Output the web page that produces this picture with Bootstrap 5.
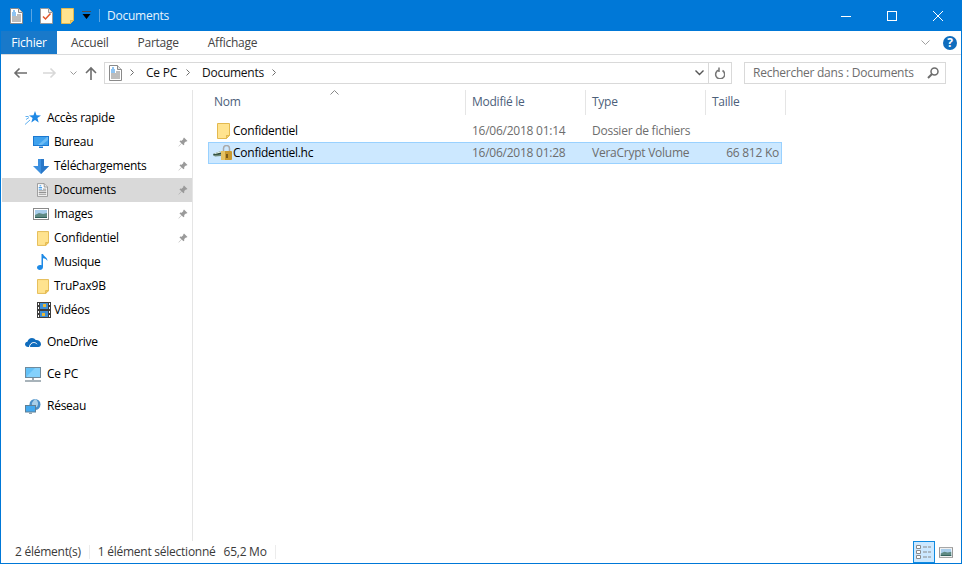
<!DOCTYPE html>
<html lang="fr">
<head>
  <meta charset="UTF-8">
  <title>Documents</title>
  <link href="https://cdn.jsdelivr.net/npm/bootstrap@5.3.3/dist/css/bootstrap.min.css" rel="stylesheet">
  <style>
    html, body { height: 564px; overflow: hidden; }
    body { background: #fff; color: #000; font: 12px/16px "Open Sans", sans-serif; letter-spacing: -.25px; }
    .win { width: 962px; height: 564px; border: 1px solid #0078d7; border-top: 0; }
    svg { display: block; flex: none; }

    .titlebar { height: 31px; background: #0078d7; color: #fff; padding-left: 9px; }
    .qa-sep { width: 1px; height: 13px; background: #5aa5e3; }
    .title-text { margin-left: 7px; color: #e8f3fc; }
    .winbtn { width: 46px; height: 31px; }

    .ribbon { height: 24px; border-bottom: 1px solid #dadbdc; }
    .rib-file { width: 56px; height: 23px; background: #1979ca; color: #fff; }
    .rib-tab { color: #444; }
    .rib-tab.t1 { margin-left: 14px; }
    .rib-tab.t2 { margin-left: 29px; }
    .rib-tab.t3 { margin-left: 29px; }
    .rib-help { width: 14px; height: 14px; border-radius: 50%; background: #0f6cbd; color: #fff; font-weight: 700; font-size: 12px; line-height: 14px; text-align: center; margin: 0 4px 0 13px; letter-spacing: 0; }

    .addr-row { height: 35px; padding: 6px 12px 6px 12px; }
    .addr-box { width: 628px; height: 22px; border: 1px solid #d9d9d9; margin-left: 7px; }
    .addr-crumb { margin-left: 12px; color: #111; }
    .addr-sep { width: 1px; height: 20px; background: #d9d9d9; }
    .search-box { width: 202px; height: 22px; border: 1px solid #d9d9d9; margin-left: 12px; padding: 0 6px 0 8px; color: #6d6d6d; }

    .main-area { height: 451px; }
    .side { width: 191px; padding-top: 16px; flex: none; }
    .side-row { height: 24px; padding-right: 4px; }
    .side-row.on { background: #d9d9d9; }
    .side-row.lvl2 { padding-left: 31px; margin-left: 1px; }
    .side-row.lvl1 { padding-left: 23px; margin-left: 1px; }
    .side-ico { width: 20px; margin-right: 1px; }
    .lvl1 .side-ico { width: 19px; margin-right: 3px; }
    .side-gap { height: 8px; }
    .pane { border-left: 1px solid #e5e5e5; width: 769px; padding-left: 15px; }

    .head-row { height: 25px; color: #4c607a; position: relative; }
    .head-cell { height: 25px; border-right: 1px solid #e5e5e5; padding-left: 6px; padding-top: 4px; }
    .col-nm { width: 258px; }
    .col-dt { width: 120px; }
    .col-ty { width: 120px; }
    .col-sz { width: 80px; }
    .sort-caret { position: absolute; left: 122px; top: 0; }
    .file-list { margin-top: 5px; }
    .file-row { width: 574px; height: 22px; border: 1px solid transparent; color: #6d6d6d; margin-left: 0; }
    .file-row.on { background: #cce8ff; border-color: #99d1ff; }
    .file-row .nm { width: 257px; padding-left: 4px; color: #000; }
    .file-row .dt { width: 120px; padding-left: 6px; }
    .file-row .ty { width: 120px; padding-left: 6px; }
    .file-row .sz { width: 75px; text-align: right; padding-right: 2px; }
    .file-ico { width: 20px; margin-right: 0; }

    .statusbar { height: 22px; color: #3a3a3a; padding-left: 14px; }
    .stat-sep { width: 1px; height: 14px; background: #ececec; }
    .view-on { width: 22px; height: 22px; background: #cce8ff; border: 1px solid #0f8ae0; border-bottom-width: 1px; }
  </style>
</head>
<body>
<svg width="0" height="0" class="position-absolute">
  <defs>
    <symbol id="i-doc" viewBox="0 0 13 16">
      <path d="M.5.5h8l4 4v11H.5z" fill="#fff" stroke="#8a8a8a"/>
      <path d="M8.5.5v4h4" fill="#e6e6e6" stroke="#8a8a8a"/>
      <path d="M3 3h2M2 5h4M2 7h4" stroke="#1e88e5"/>
      <path d="M2 9h9M2 11h9M2 13h9M7 7h4" stroke="#7a7a7a"/>
    </symbol>
    <symbol id="i-task" viewBox="0 0 13 16">
      <path d="M.5.5h8l4 4v11H.5z" fill="#fff" stroke="#9a9a9a"/>
      <path d="M8.5.5v4h4" fill="#e6e6e6" stroke="#9a9a9a"/>
      <path d="M3 8.5l2.5 2.5 5-5.500" fill="none" stroke="#e2562a" stroke-width="1.500"/>
    </symbol>
    <symbol id="i-folder" viewBox="0 0 13 16">
      <path d="M.5.5h12v12h-3v3H.5z" fill="#ffe38f" stroke="#e3b94f"/>
      <path d="M9.500 15.500v-3h3z" fill="#f4cf6b" stroke="#e3b94f"/>
    </symbol>
    <symbol id="i-pin" viewBox="0 0 10 10">
      <path d="M6 .5l3.500 3.500-1 .6-.6-.2-1.700 1.700.1 1.400-.8.8-1.900-1.900L.8 9.500l-.3-.3 2.900-2.900-1.900-1.900.8-.8 1.400.1L5.400 2l-.2-.6z" fill="#9a9a9a"/>
    </symbol>
    <symbol id="i-star" viewBox="0 0 16 14">
      <path d="M10 0l1.500 4.300 4.500.1-3.600 2.700 1.300 4.400-3.700-2.600-3.700 2.600 1.300-4.400-3.600-2.700 4.500-.1z" fill="#1e88e5"/>
      <path d="M0 13.500l5-4.500M1 8.500l3-2M.5 5.500h3" stroke="#5fb0f0"/>
    </symbol>
    <symbol id="i-desk" viewBox="0 0 16 12">
      <rect width="16" height="10" fill="#1b78d0"/>
      <rect x="1" y="1" width="14" height="8" fill="#3fa2ee"/>
      <path d="M5 9l9-8h1v3l-6 5z" fill="#6dbcf5"/>
      <rect x="6" y="10.500" width="4" height="1.500" fill="#1b78d0"/>
    </symbol>
    <symbol id="i-down" viewBox="0 0 16 15">
      <path d="M5 0h6v7h5l-8 8-8-8h5z" fill="#3b8fdf"/>
      <path d="M8 0h3v7h5l-8 8z" fill="#2a78c8"/>
    </symbol>
    <symbol id="i-img" viewBox="0 0 16 12">
      <rect x=".5" y=".5" width="15" height="11" fill="#fff" stroke="#8a8a8a"/>
      <rect x="2" y="2" width="12" height="8" fill="#a8cdea"/>
      <path d="M2 7l4-2 4 1 4-1v5H2z" fill="#5f8a83"/>
      <path d="M2 9h12v1H2z" fill="#2f5f58"/>
    </symbol>
    <symbol id="i-music" viewBox="0 0 11 16">
      <path d="M4.500 0h1.500c.4 2.500 4.500 3 4.500 7-1-1.500-2.500-2.500-4.500-2.700V13c0 1.800-1.500 3-3.200 3C1.300 16 0 15 0 13.500S1.500 11 3 11c.6 0 1.100.1 1.500.3z" fill="#1e8ae6"/>
    </symbol>
    <symbol id="i-film" viewBox="0 0 14 16">
      <rect width="14" height="16" fill="#3c3c3c"/>
      <path d="M1 1h1v2H1zM1 5h1v2H1zM1 9h1v2H1zM1 13h1v2H1zM12 1h1v2h-1zM12 5h1v2h-1zM12 9h1v2h-1zM12 13h1v2h-1z" fill="#fff"/>
      <rect x="3" y="1" width="8" height="6" fill="#3d8fd6"/>
      <rect x="3" y="9" width="8" height="6" fill="#3d8fd6"/>
      <path d="M6 2h3v3H6zM5 11h3v3H5z" fill="#e6b93a"/>
    </symbol>
    <symbol id="i-cloud" viewBox="0 0 16 10">
      <path d="M3.200 10C1.400 10 0 8.800 0 7.300c0-1.400 1-2.400 2.400-2.600C3 2.500 4.800 1 7 1c1.500 0 2.900.7 3.700 2C13.700 2.800 16 4.700 16 7.300 16 8.800 14.800 10 13.200 10z" fill="#0f6cbd"/>
      <path d="M4.500 10c0-2.500 2-4.500 4.300-4.500 1.400 0 2.600.7 3.200 1.700" fill="none" stroke="#fff"/>
    </symbol>
    <symbol id="i-pc" viewBox="0 0 16 15">
      <rect x=".5" y=".5" width="15" height="10" fill="#63c1f7" stroke="#6f8a9c"/>
      <path d="M2 9L10 1h5v9H2z" fill="#9bdcff" opacity=".6"/>
      <path d="M7 11h2v2H7z" fill="#9aa7b0"/>
      <path d="M0 13h16v2H0z" fill="#a8b3ba"/>
    </symbol>
    <symbol id="i-net" viewBox="0 0 16 15">
      <circle cx="10" cy="5.500" r="5.500" fill="#4a8fc7"/>
      <path d="M10 0c3 1 4 5 2 8l-4 1c1-2-2-3-1-5s2-3 3-4z" fill="#a9cfe8"/>
      <rect x=".5" y="6.500" width="10" height="6.500" fill="#43a9ef" stroke="#5f7f95"/>
      <path d="M4 13.500h3V15H4z" fill="#93a2ac"/>
    </symbol>
    <symbol id="i-vera" viewBox="0 0 20 17">
      <path d="M0 9l8-3v3.500l-7 1.500z" fill="#2c4a3c"/>
      <path d="M1 8.500L8 6v1.500L2 9z" fill="#dfeee6"/>
      <path d="M0 10l8-.500V11l-6 .5z" fill="#6f8a78"/>
      <path d="M10.500 6V3.500a3 3 0 016 0V6" fill="none" stroke="#a9a9a9" stroke-width="1.500"/>
      <rect x="8" y="6" width="11" height="9" rx="1" fill="#c9992f"/>
      <rect x="8" y="6" width="4" height="9" fill="#e5c263"/>
      <path d="M13 9h2v4h-2z" fill="#7a5a18"/>
    </symbol>
  </defs>
</svg>

<div class="win d-flex flex-column">
  <div class="titlebar d-flex align-items-center">
    <svg width="13" height="16"><use href="#i-doc"/></svg>
    <span class="qa-sep ms-2"></span>
    <svg class="ms-2" width="13" height="16"><use href="#i-task"/></svg>
    <svg class="ms-2" width="13" height="16"><use href="#i-folder"/></svg>
    <svg class="ms-2" width="9" height="9" viewBox="0 0 9 9"><path d="M0 0h9v1H0zM.5 3h8L4.500 8z" fill="#000"/><path d="M0 0h9v1H0z" fill="#fff" opacity=".3"/></svg>
    <span class="qa-sep ms-2"></span>
    <span class="title-text">Documents</span>
    <div class="d-flex ms-auto">
      <div class="winbtn d-flex align-items-center justify-content-center"><svg width="10" height="10"><path d="M0 5.500h10" stroke="#fff"/></svg></div>
      <div class="winbtn d-flex align-items-center justify-content-center"><svg width="10" height="10"><rect x=".5" y=".5" width="9" height="9" fill="none" stroke="#fff"/></svg></div>
      <div class="winbtn d-flex align-items-center justify-content-center"><svg width="10" height="10"><path d="M0 0l10 10M10 0L0 10" stroke="#fff"/></svg></div>
    </div>
  </div>

  <div class="ribbon d-flex align-items-center">
    <div class="rib-file d-flex align-items-center justify-content-center">Fichier</div>
    <span class="rib-tab t1">Accueil</span>
    <span class="rib-tab t2">Partage</span>
    <span class="rib-tab t3">Affichage</span>
    <svg class="ms-auto" width="9" height="5"><path d="M.5.500l4 4 4-4" fill="none" stroke="#a0a0a0"/></svg>
    <div class="rib-help">?</div>
  </div>

  <div class="addr-row d-flex align-items-center">
    <svg width="14" height="12"><path d="M14 6H2M6.500 1.500L2 6l4.500 4.500" fill="none" stroke="#6d6d6d" stroke-width="1.600"/></svg>
    <svg class="ms-3" width="14" height="12"><path d="M0 6h12M7.500 1.500L12 6l-4.500 4.500" fill="none" stroke="#d8d8d8" stroke-width="1.600"/></svg>
    <svg style="margin-left:13px" width="7" height="4"><path d="M.5.500l3 3 3-3" fill="none" stroke="#9a9a9a"/></svg>
    <svg class="ms-2" width="12" height="14"><path d="M6 14V2M1 7l5-5 5 5" fill="none" stroke="#6d6d6d" stroke-width="1.600"/></svg>
    <div class="addr-box d-flex align-items-center ps-1">
      <svg width="13" height="16"><use href="#i-doc"/></svg>
      <svg class="ms-2" width="4" height="7"><path d="M.5.500l3 3-3 3" fill="none" stroke="#6d6d6d"/></svg>
      <span class="addr-crumb">Ce PC</span>
      <svg class="ms-2" width="4" height="7" style="margin-left:9px!important"><path d="M.5.500l3 3-3 3" fill="none" stroke="#6d6d6d"/></svg>
      <span class="addr-crumb">Documents</span>
      <svg class="ms-2" width="4" height="7"><path d="M.5.500l3 3-3 3" fill="none" stroke="#6d6d6d"/></svg>
      <svg class="ms-auto me-1" width="9" height="6"><path d="M.5.500l4 4 4-4" fill="none" stroke="#555" stroke-width="1.400"/></svg>
      <span class="addr-sep"></span>
      <svg style="margin:0 6px 0 5px" width="11" height="12" viewBox="0 0 11 12"><path d="M8.500 3.500A4.500 4.500 0 1 1 5 3M5 .5V5" fill="none" stroke="#777" stroke-width="1.500"/></svg>
    </div>
    <div class="search-box d-flex align-items-center justify-content-between">
      <span>Rechercher dans : Documents</span>
      <svg width="12" height="12"><circle cx="7.500" cy="4.500" r="3.500" fill="none" stroke="#6d6d6d" stroke-width="1.500"/><path d="M5 7l-4 4" stroke="#6d6d6d" stroke-width="2"/></svg>
    </div>
  </div>

  <div class="main-area d-flex">
    <div class="side">
      <div class="side-row lvl1 d-flex align-items-center"><span class="side-ico"><svg width="16" height="14"><use href="#i-star"/></svg></span>Accès rapide</div>
      <div class="side-row lvl2 d-flex align-items-center"><span class="side-ico d-flex"><svg width="16" height="12"><use href="#i-desk"/></svg></span>Bureau<svg class="ms-auto" width="10" height="10"><use href="#i-pin"/></svg></div>
      <div class="side-row lvl2 d-flex align-items-center"><span class="side-ico d-flex"><svg width="16" height="15"><use href="#i-down"/></svg></span>Téléchargements<svg class="ms-auto" width="10" height="10"><use href="#i-pin"/></svg></div>
      <div class="side-row lvl2 on d-flex align-items-center"><span class="side-ico d-flex"><svg class="ms-1" width="11" height="14"><use href="#i-doc"/></svg></span>Documents<svg class="ms-auto" width="10" height="10"><use href="#i-pin"/></svg></div>
      <div class="side-row lvl2 d-flex align-items-center"><span class="side-ico d-flex"><svg width="16" height="12"><use href="#i-img"/></svg></span>Images<svg class="ms-auto" width="10" height="10"><use href="#i-pin"/></svg></div>
      <div class="side-row lvl2 d-flex align-items-center"><span class="side-ico d-flex"><svg class="ms-1" width="12" height="15"><use href="#i-folder"/></svg></span>Confidentiel<svg class="ms-auto" width="10" height="10"><use href="#i-pin"/></svg></div>
      <div class="side-row lvl2 d-flex align-items-center"><span class="side-ico d-flex"><svg class="ms-1" width="11" height="16"><use href="#i-music"/></svg></span>Musique</div>
      <div class="side-row lvl2 d-flex align-items-center"><span class="side-ico d-flex"><svg class="ms-1" width="12" height="15"><use href="#i-folder"/></svg></span>TruPax9B</div>
      <div class="side-row lvl2 d-flex align-items-center"><span class="side-ico d-flex"><svg class="ms-1" width="14" height="16"><use href="#i-film"/></svg></span>Vidéos</div>
      <div class="side-gap"></div>
      <div class="side-row lvl1 d-flex align-items-center"><span class="side-ico"><svg width="16" height="10"><use href="#i-cloud"/></svg></span>OneDrive</div>
      <div class="side-gap"></div>
      <div class="side-row lvl1 d-flex align-items-center"><span class="side-ico"><svg width="16" height="15"><use href="#i-pc"/></svg></span>Ce PC</div>
      <div class="side-gap"></div>
      <div class="side-row lvl1 d-flex align-items-center"><span class="side-ico"><svg width="16" height="15"><use href="#i-net"/></svg></span>Réseau</div>
    </div>

    <div class="pane">
      <div class="head-row d-flex">
        <div class="head-cell col-nm">Nom</div>
        <div class="head-cell col-dt">Modifié le</div>
        <div class="head-cell col-ty">Type</div>
        <div class="head-cell col-sz">Taille</div>
        <svg class="sort-caret" width="9" height="5"><path d="M.5 4.500l4-4 4 4" fill="none" stroke="#888"/></svg>
      </div>
      <div class="file-list">
        <div class="file-row d-flex align-items-center">
          <span class="nm d-flex align-items-center"><span class="file-ico d-flex"><svg class="ms-1" width="13" height="16"><use href="#i-folder"/></svg></span>Confidentiel</span>
          <span class="dt">16/06/2018 01:14</span>
          <span class="ty">Dossier de fichiers</span>
          <span class="sz"></span>
        </div>
        <div class="file-row on d-flex align-items-center">
          <span class="nm d-flex align-items-center"><span class="file-ico d-flex"><svg width="20" height="17"><use href="#i-vera"/></svg></span>Confidentiel.hc</span>
          <span class="dt">16/06/2018 01:28</span>
          <span class="ty">VeraCrypt Volume</span>
          <span class="sz">66 812 Ko</span>
        </div>
      </div>
    </div>
  </div>

  <div class="statusbar d-flex align-items-center">
    <span>2 élément(s)</span>
    <span class="stat-sep ms-2"></span>
    <span class="ms-2">1 élément sélectionné</span>
    <span class="ms-2">65,2 Mo</span>
    <span class="stat-sep ms-2"></span>
    <div class="d-flex align-items-center ms-auto me-2">
      <div class="view-on d-flex align-items-center justify-content-center">
        <svg width="16" height="14"><path d="M.5.500h4v3h-4zM.5 5.500h4v3h-4zM.5 10.500h4v3h-4z" fill="#fff" stroke="#8a8a8a"/><path d="M7 2h4M12 2h3M7 7h4M12 7h3M7 12h4M12 12h3" stroke="#8a8a8a"/></svg>
      </div>
      <svg class="ms-1" width="14" height="11"><use href="#i-img"/></svg>
    </div>
  </div>
</div>
<script src="https://cdn.jsdelivr.net/npm/bootstrap@5.3.3/dist/js/bootstrap.bundle.min.js"></script>
</body>
</html>
